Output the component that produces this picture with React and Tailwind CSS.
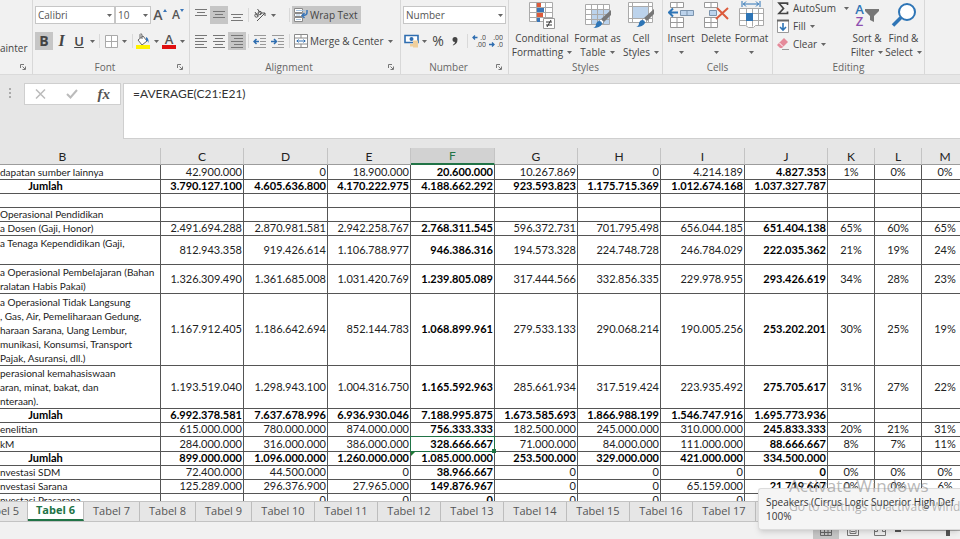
import React, { useState } from 'react';

const columns = [
  { id: 'B', width: 'w-[161px]' },
  { id: 'C', width: 'w-[83px]' },
  { id: 'D', width: 'w-[84px]' },
  { id: 'E', width: 'w-[83px]' },
  { id: 'F', width: 'w-[84px]' },
  { id: 'G', width: 'w-[83px]' },
  { id: 'H', width: 'w-[83px]' },
  { id: 'I', width: 'w-[84px]' },
  { id: 'J', width: 'w-[83px]' },
  { id: 'K', width: 'w-[47px]' },
  { id: 'L', width: 'w-[47px]' },
  { id: 'M', width: 'w-[47px]' },
];

const rows = [
  { h: 'h-[15px]', label: ['dapatan sumber lainnya'], v: ['42.900.000', '0', '18.900.000', '20.600.000', '10.267.869', '0', '4.214.189', '4.827.353', '1%', '0%', '0%'] },
  { h: 'h-[14px]', total: true, label: ['Jumlah'], v: ['3.790.127.100', '4.605.636.800', '4.170.222.975', '4.188.662.292', '923.593.823', '1.175.715.369', '1.012.674.168', '1.037.327.787', '', '', ''] },
  { h: 'h-[14px]', label: [''], v: ['', '', '', '', '', '', '', '', '', '', ''] },
  { h: 'h-[14px]', label: ['Operasional Pendidikan'], v: ['', '', '', '', '', '', '', '', '', '', ''] },
  { h: 'h-[14px]', label: ['a Dosen (Gaji, Honor)'], v: ['2.491.694.288', '2.870.981.581', '2.942.258.767', '2.768.311.545', '596.372.731', '701.795.498', '656.044.185', '651.404.138', '65%', '60%', '65%'] },
  { h: 'h-[29px]', label: ['a Tenaga Kependidikan (Gaji,', ''], v: ['812.943.358', '919.426.614', '1.106.788.977', '946.386.316', '194.573.328', '224.748.728', '246.784.029', '222.035.362', '21%', '19%', '24%'] },
  { h: 'h-[29px]', label: ['a Operasional Pembelajaran (Bahan', 'ralatan Habis Pakai)'], v: ['1.326.309.490', '1.361.685.008', '1.031.420.769', '1.239.805.089', '317.444.566', '332.856.335', '229.978.955', '293.426.619', '34%', '28%', '23%'] },
  { h: 'h-[72px]', label: ['a Operasional Tidak Langsung', ', Gas, Air, Pemeliharaan Gedung,', 'haraan Sarana, Uang Lembur,', 'munikasi, Konsumsi, Transport', 'Pajak, Asuransi, dll.)'], v: ['1.167.912.405', '1.186.642.694', '852.144.783', '1.068.899.961', '279.533.133', '290.068.214', '190.005.256', '253.202.201', '30%', '25%', '19%'] },
  { h: 'h-[43px]', label: ['perasional kemahasiswaan', 'aran, minat, bakat, dan', 'nteraan).'], v: ['1.193.519.040', '1.298.943.100', '1.004.316.750', '1.165.592.963', '285.661.934', '317.519.424', '223.935.492', '275.705.617', '31%', '27%', '22%'] },
  { h: 'h-[14px]', total: true, label: ['Jumlah'], v: ['6.992.378.581', '7.637.678.996', '6.936.930.046', '7.188.995.875', '1.673.585.693', '1.866.988.199', '1.546.747.916', '1.695.773.936', '', '', ''] },
  { h: 'h-[14px]', label: ['enelitian'], v: ['615.000.000', '780.000.000', '874.000.000', '756.333.333', '182.500.000', '245.000.000', '310.000.000', '245.833.333', '20%', '21%', '31%'] },
  { h: 'h-[15px]', active: true, label: ['kM'], v: ['284.000.000', '316.000.000', '386.000.000', '328.666.667', '71.000.000', '84.000.000', '111.000.000', '88.666.667', '8%', '7%', '11%'] },
  { h: 'h-[14px]', total: true, flag: true, label: ['Jumlah'], v: ['899.000.000', '1.096.000.000', '1.260.000.000', '1.085.000.000', '253.500.000', '329.000.000', '421.000.000', '334.500.000', '', '', ''] },
  { h: 'h-[14px]', label: ['nvestasi SDM'], v: ['72.400.000', '44.500.000', '0', '38.966.667', '0', '0', '0', '0', '0%', '0%', '0%'] },
  { h: 'h-[14px]', label: ['nvestasi Sarana'], v: ['125.289.000', '296.376.900', '27.965.000', '149.876.967', '0', '0', '65.159.000', '21.719.667', '0%', '0%', '6%'] },
  { h: 'h-[14px]', label: ['nvestasi Prasarana'], v: ['', '0', '0', '0', '0', '0', '0', '', '', '', ''] },
];

const sheets = [5, 6, 7, 8, 9, 10, 11, 12, 13, 14, 15, 16, 17, 18];

function Caret() {
  return (
    <svg width="5" height="3" viewBox="0 0 5 3" className="shrink-0">
      <path d="M0 0h5L2.5 3z" fill="#666" />
    </svg>
  );
}

function DropButton({ label, width = 'w-[10px]' }) {
  return (
    <button type="button" aria-label={label} className={`flex h-[18px] items-center justify-center ${width}`}>
      <Caret />
    </button>
  );
}

function Tool({ label, width = 'w-[18px]', pressed, children }) {
  return (
    <button
      type="button"
      aria-label={label}
      className={`flex h-[18px] shrink-0 items-center justify-center ${width} ${pressed ? 'bg-[#c6c6c6]' : ''}`}
    >
      {children}
    </button>
  );
}

function Divider({ width = 'w-[5px]' }) {
  return (
    <div className={`flex h-[14px] shrink-0 justify-center ${width}`}>
      <div className="w-px bg-[#d9d9d9]" />
    </div>
  );
}

function Group({ title, width, launcher, children }) {
  return (
    <section className={`flex shrink-0 flex-col justify-between border-r border-[#d8d8d8] ${width}`}>
      <div>{children}</div>
      <div className="flex h-[14px] items-center">
        <div className="flex-1 text-center text-[#666]">{title}</div>
        {launcher && (
          <button type="button" aria-label={`${title} settings`} className="w-3">
            <svg width="6" height="6" viewBox="0 0 6 6" fill="none" stroke="#777">
              <path d="M.5 4V.5H4M2.5 2.5l2.5 2.5M5.5 2.5v3h-3" />
            </svg>
          </button>
        )}
      </div>
    </section>
  );
}

function BigButton({ lines, width, icon }) {
  return (
    <button type="button" className={`flex shrink-0 flex-col items-center whitespace-nowrap ${width}`}>
      <span className="flex h-[31px] items-start justify-center">{icon}</span>
      <span className="leading-[14px]">{lines[0]}</span>
      <span className="flex h-[14px] items-center gap-1 leading-[14px]">
        {lines[1] && <span>{lines[1]}</span>}
        <Caret />
      </span>
    </button>
  );
}

function Lines({ rows: list }) {
  return (
    <svg width="12" height="14" viewBox="0 0 12 14" stroke="#777">
      {list.map(([x1, x2, y]) => (
        <path key={y} d={`M${x1} ${y}.5H${x2}`} />
      ))}
    </svg>
  );
}

function Combo({ label, value, width }) {
  return (
    <div className={`relative h-[18px] border border-[#c6c6c6] bg-white ${width}`}>
      <select aria-label={label} defaultValue={value} className="block h-full w-full appearance-none pl-[2px] leading-[16px] text-[#555]">
        <option>{value}</option>
      </select>
      <span className="pointer-events-none absolute right-[2px] top-[7px]">
        <Caret />
      </span>
    </div>
  );
}

function FontGroup() {
  return (
    <Group title="Font" width="w-[157px]" launcher>
      <div className="flex flex-col gap-2 pl-[2px] pt-[6px]">
        <div className="flex items-center">
          <Combo label="Font" value="Calibri" width="w-[80px]" />
          <Combo label="Font size" value="10" width="w-[36px]" />
          <Tool label="Increase font size">
            <span className="text-sm font-semibold text-[#555]">A</span>
            <svg width="4" height="12" viewBox="0 0 4 12"><path d="M0 3l2-3 2 3z" fill="#3a76b8" /></svg>
          </Tool>
          <Tool label="Decrease font size">
            <span className="text-xs font-semibold text-[#555]">A</span>
            <svg width="4" height="12" viewBox="0 0 4 12"><path d="M0 0h4L2 3z" fill="#3a76b8" /></svg>
          </Tool>
        </div>
        <div className="flex items-center">
          <Tool label="Bold" pressed><span className="text-sm font-bold text-[#444]">B</span></Tool>
          <Tool label="Italic" width="w-[17px]"><span className="font-['Liberation_Serif',serif] text-base font-bold italic text-[#444]">I</span></Tool>
          <Tool label="Underline"><span className="text-[13px] leading-[14px] font-semibold text-[#444] underline">U</span></Tool>
          <DropButton label="Underline styles" width="w-[8px]" />
          <Divider width="w-[7px]" />
          <Tool label="Borders" width="w-[16px]">
            <svg width="13" height="13" viewBox="0 0 13 13" fill="#fff" stroke="#aaa"><path d="M.5.5h12v12H.5zM6.5.5v12M.5 6.5h12" /></svg>
          </Tool>
          <DropButton label="Border styles" />
          <Divider width="w-[6px]" />
          <Tool label="Fill color" width="w-[16px]">
            <svg width="16" height="16" viewBox="0 0 16 16" fill="none">
              <path d="M3 7l5-4 4 5-5 4z" fill="#fff" stroke="#666" />
              <path d="M7 6V1.5q-1.500-1.500-2 0V5" stroke="#666" />
              <path d="M11 4q3 1 2.500 6-1-3-2.500-2z" fill="#3a76b8" />
              <path d="M1 12h14v4H1z" fill="#fff200" />
            </svg>
          </Tool>
          <DropButton label="Fill colors" />
          <Tool label="Font color" width="w-[16px]">
            <span className="flex flex-col items-center">
              <span className="text-[13px] leading-[12px] font-semibold text-[#555]">A</span>
              <span className="h-1 w-[14px] bg-[#e01010]" />
            </span>
          </Tool>
          <DropButton label="Font colors" />
        </div>
      </div>
    </Group>
  );
}

function AlignmentGroup() {
  return (
    <Group title="Alignment" width="w-[211px]" launcher>
      <div className="flex flex-col gap-2 pl-[2px] pt-[6px]">
        <div className="flex items-center">
          <Tool label="Top align"><Lines rows={[[0, 12, 1], [2, 10, 4], [0, 12, 7]]} /></Tool>
          <Tool label="Middle align" pressed><Lines rows={[[0, 12, 3], [2, 10, 6], [0, 12, 9]]} /></Tool>
          <Tool label="Bottom align"><Lines rows={[[0, 12, 6], [2, 10, 9], [0, 12, 12]]} /></Tool>
          <Divider />
          <Tool label="Orientation">
            <svg width="14" height="14" viewBox="0 0 14 14" fill="none" stroke="#555">
              <circle cx="3.500" cy="7.500" r="1.700" />
              <circle cx="6.800" cy="5" r="1.700" />
              <path d="M2 4l3 4.500M4.500 1l3.500 5M4 13l8-8M12 5H9M12 5v3" />
            </svg>
          </Tool>
          <DropButton label="Orientation options" width="w-[8px]" />
          <div className="w-[10px]" />
          <Divider />
          <button type="button" className="flex h-[18px] w-[69px] items-center gap-[2px] whitespace-nowrap bg-[#c6c6c6] pl-[2px]">
            <svg width="14" height="14" viewBox="0 0 14 14" fill="none">
              <path d="M.5.5h8v4h-8zM.5 5.500h8v3h-8zM.5 9.500h8v4h-8z" fill="#fff" stroke="#8a8a8a" />
              <path d="M2 2.500h9M2 7h4M2 11.500h5" stroke="#a8c4e0" />
              <path d="M13 2v2.500q0 3-4.500 3M10.500 5L8 7.500l2.500 2.500" stroke="#3a76b8" strokeWidth="1.500" />
            </svg>
            Wrap Text
          </button>
        </div>
        <div className="flex items-center">
          <Tool label="Align left"><Lines rows={[[0, 12, 1], [0, 9, 4], [0, 12, 7], [0, 9, 10], [0, 12, 13]]} /></Tool>
          <Tool label="Center"><Lines rows={[[0, 12, 1], [2, 10, 4], [0, 12, 7], [2, 10, 10], [0, 12, 13]]} /></Tool>
          <Tool label="Align right" pressed><Lines rows={[[0, 12, 1], [3, 12, 4], [0, 12, 7], [3, 12, 10], [0, 12, 13]]} /></Tool>
          <Divider />
          <Tool label="Decrease indent">
            <svg width="14" height="13" viewBox="0 0 14 13" fill="none">
              <path d="M1 .5h12M7 3.500h6M7 6.500h6M7 9.500h6M1 12.500h12" stroke="#999" />
              <path d="M6 6.500H1M3.500 4L1 6.500 3.500 9" stroke="#2e6db0" strokeWidth="1.500" />
            </svg>
          </Tool>
          <Tool label="Increase indent">
            <svg width="14" height="13" viewBox="0 0 14 13" fill="none">
              <path d="M1 .5h12M7 3.500h6M7 6.500h6M7 9.500h6M1 12.500h12" stroke="#999" />
              <path d="M0 6.500h5M3 4l2.500 2.500L3 9" stroke="#2e6db0" strokeWidth="1.500" />
            </svg>
          </Tool>
          <Divider />
          <button type="button" className="flex h-[18px] items-center gap-[2px] whitespace-nowrap pl-[2px]">
            <svg width="14" height="14" viewBox="0 0 14 14" fill="none">
              <path d="M.5.5h13v13H.5zM.5 4h13M.5 10h13M7 .5V4M7 10v3.500" fill="#fff" stroke="#8a8a8a" />
              <path d="M2.500 7h9M4.500 5.500L3 7l1.500 1.500M9.500 5.500L11 7 9.500 8.500" stroke="#2e6db0" />
            </svg>
            Merge &amp; Center
          </button>
          <DropButton label="Merge options" width="w-[14px]" />
        </div>
      </div>
    </Group>
  );
}

function DecimalIcon({ more }) {
  return (
    <svg width="14" height="14" viewBox="0 0 14 14" fill="none">
      <text x="14" y="6" textAnchor="end" fontSize="7" fill="#444">{more ? '.0' : '.00'}</text>
      <text x="14" y="13" textAnchor="end" fontSize="7" fill="#444">{more ? '.00' : '.0'}</text>
      <path d={more ? 'M5.500 3.500H1M3 1.500l-2 2 2 2' : 'M0 10.500h4.500M3 8.500l2 2-2 2'} stroke="#2e6db0" strokeWidth="1.300" />
    </svg>
  );
}

function NumberGroup() {
  return (
    <Group title="Number" width="w-[108px]" launcher>
      <div className="flex flex-col gap-2 pl-[2px] pt-[6px]">
        <Combo label="Number format" value="Number" width="w-[103px]" />
        <div className="flex items-center">
          <Tool label="Accounting format" width="w-[16px]">
            <svg width="15" height="14" viewBox="0 0 15 14">
              <path d="M1 1.500h13v7H1z" fill="#fff" stroke="#2e6db0" strokeWidth="1.600" />
              <circle cx="7.500" cy="5" r="2" fill="#2e6db0" />
              <path d="M9 6.500h5v2.500H9zM6 10h4v2.500H6zM9 9h5v4.500H9z" fill="#f0cf9c" />
            </svg>
          </Tool>
          <DropButton label="Accounting options" />
          <Tool label="Percent"><span className="text-sm text-[#444]">%</span></Tool>
          <Tool label="Comma style" width="w-[16px]">
            <svg width="6" height="9" viewBox="0 0 6 9"><path d="M3 0a2.500 2.500 0 0 1 2.500 2.500Q5.500 7 1 8.500L.8 8Q3 6.500 3 5A2.500 2.500 0 0 1 3 0z" fill="#444" /></svg>
          </Tool>
          <Divider width="w-[8px]" />
          <Tool label="Increase decimal" width="w-[16px]"><DecimalIcon more /></Tool>
          <Tool label="Decrease decimal"><DecimalIcon /></Tool>
        </div>
      </div>
    </Group>
  );
}

function Brush({ x, y }) {
  return (
    <g transform={`translate(${x} ${y})`}>
      <path d="M18 0v5l-7 7-3-3z" fill="#777" />
      <path d="M8 9l3 3-2 2-3-3z" fill="#fff" stroke="#777" strokeWidth=".6" />
      <path d="M6 11q3 0 3 3-2 4-9 4 3-1 3-4 1-3 3-3z" fill="#2e75b6" />
    </g>
  );
}

function StylesGroup() {
  return (
    <Group title="Styles" width="w-[154px]">
      <div className="flex pl-[2px]">
        <BigButton
          lines={['Conditional', 'Formatting']}
          width="w-[62px]"
          icon={
            <svg width="26" height="29" viewBox="0 0 26 29" fill="none">
              <path d="M.5 2.500h23v19H.5zM.5 7.500h23M.5 12.500h23M.5 17.500h23M7.500 2.500v19M16.500 2.500v19" fill="#fff" stroke="#aaa" />
              <path d="M8 3h4v4H8zM8 13h6v4H8z" fill="#dc5b3c" />
              <path d="M8 8h7v4H8zM8 18h3v4H8z" fill="#3a76b8" />
              <path d="M14.500 18.500h11v10h-11z" fill="#fff" stroke="#999" />
              <path d="M17 22h6M17 25h6M22 20l-4 7" stroke="#333" />
            </svg>
          }
        />
        <BigButton
          lines={['Format as', 'Table']}
          width="w-[49px]"
          icon={
            <svg width="28" height="29" viewBox="0 0 28 29" fill="none">
              <path d="M1.500 4.500h24v20h-24z" fill="#fff" stroke="#aaa" />
              <path d="M8 9h17v15H8z" fill="#bcd3ec" />
              <path d="M1.500 9.500h24M1.500 14.500h24M1.500 19.500h24M7.500 4.500v20M13.500 4.500v20M19.500 4.500v20" stroke="#aaa" />
              <Brush x={9} y={10} />
            </svg>
          }
        />
        <BigButton
          lines={['Cell', 'Styles']}
          width="w-[38px]"
          icon={
            <svg width="28" height="29" viewBox="0 0 28 29" fill="none">
              <path d="M1.500 2.500h24v20h-24zM1.500 6.500h24M1.500 18.500h24M5.500 2.500v20M21.500 2.500v20" fill="#fff" stroke="#aaa" />
              <path d="M6 7h15v11H6z" fill="#bcd3ec" />
              <Brush x={9} y={9} />
            </svg>
          }
        />
      </div>
    </Group>
  );
}

function CellsGroup() {
  return (
    <Group title="Cells" width="w-[110px]">
      <div className="flex">
        <BigButton
          lines={['Insert', '']}
          width="w-[36px]"
          icon={
            <svg width="26" height="29" viewBox="0 0 26 29" fill="none">
              <path d="M2.500 2.500h13v5h-13zM9 2.500v5M2.500 17.500h13v10h-13zM9 17.500v10M2.500 22.500h13" fill="#fff" stroke="#999" />
              <path d="M12.500 10.500h13v5h-13zM19 10.500v5" fill="#bcd3ec" stroke="#7a93ad" />
              <path d="M10 12.500H1M5 8.500l-4 4 4 4" stroke="#2e75b6" strokeWidth="2" />
            </svg>
          }
        />
        <BigButton
          lines={['Delete', '']}
          width="w-[34px]"
          icon={
            <svg width="26" height="29" viewBox="0 0 26 29" fill="none">
              <path d="M1.500 2.500h13v5h-13zM8 2.500v5M1.500 17.500h13v10h-13zM8 17.500v10M1.500 22.500h13" fill="#fff" stroke="#999" />
              <path d="M6.500 10.500h7v5h-7z" fill="#bcd3ec" stroke="#7a93ad" />
              <path d="M14 8l11 11M25 8L13 19" stroke="#dc5b3c" strokeWidth="2" />
            </svg>
          }
        />
        <BigButton
          lines={['Format', '']}
          width="w-[37px]"
          icon={
            <svg width="26" height="29" viewBox="0 0 26 29" fill="none">
              <path d="M.5 8.500h24v17h-8l-2 2h-5l-3-2h-6zM.5 13.500h24M.5 20.500h24M7.500 8.500v17M13.500 8.500v18M19.500 8.500v17" fill="#fff" stroke="#aaa" />
              <path d="M7 13h7v8H7z" fill="#2e75b6" />
              <path d="M3 1v6M21 1v6M4 4h16M7 1.500L4.500 4 7 6.500M17 1.500L19.500 4 17 6.500" stroke="#2e75b6" />
            </svg>
          }
        />
      </div>
    </Group>
  );
}

function EditingGroup() {
  return (
    <Group title="Editing" width="w-[152px]">
      <div className="flex">
        <div className="flex w-[76px] shrink-0 flex-col pl-1">
          <button type="button" className="flex h-[17px] items-center gap-1">
            <svg width="12" height="13" viewBox="0 0 12 13" fill="none"><path d="M10.500 3V1.200H2L6.500 6.500 2 11.500h8.500V9.500" stroke="#444" strokeWidth="1.700" /></svg>
            <span className="flex-1 text-left">AutoSum</span>
            <Caret />
          </button>
          <button type="button" className="flex h-[18px] items-center gap-1">
            <svg width="12" height="14" viewBox="0 0 12 14" fill="none">
              <path d="M.5 1.500h11v12H.5z" fill="#fff" stroke="#999" />
              <path d="M0 1.500h12" stroke="#666" strokeWidth="2" />
              <path d="M6 4v7M3 8l3 3 3-3" stroke="#2e75b6" strokeWidth="1.600" />
            </svg>
            Fill
            <Caret />
          </button>
          <button type="button" className="flex h-[18px] items-center gap-1">
            <svg width="12" height="12" viewBox="0 0 12 12">
              <path d="M7 0l4 4-6 6H3L0 7z" fill="#e58a9a" />
              <path d="M2.500 5L6 8.500" stroke="#fff" />
              <path d="M5 11.500h7" stroke="#999" />
            </svg>
            Clear
            <Caret />
          </button>
        </div>
        <BigButton
          lines={['Sort &', 'Filter']}
          width="w-[36px]"
          icon={
            <span className="flex items-center">
              <span className="flex flex-col text-[13px] leading-[12px] font-semibold">
                <span className="text-[#2e75b6]">A</span>
                <span className="text-[#8e4fb0]">Z</span>
              </span>
              <svg width="15" height="29" viewBox="0 0 15 29"><path d="M1 9h14v2l-5 5v6l-4-2v-4L1 11z" fill="#777" /></svg>
            </span>
          }
        />
        <BigButton
          lines={['Find &', 'Select']}
          width="w-[37px]"
          icon={
            <svg width="26" height="29" viewBox="0 0 26 29" fill="none">
              <circle cx="16" cy="12" r="8" fill="#fff" stroke="#2e75b6" strokeWidth="2" />
              <path d="M10 17.500l-8 8" stroke="#2e75b6" strokeWidth="3.500" />
            </svg>
          }
        />
      </div>
    </Group>
  );
}

function Ribbon() {
  return (
    <header className="flex h-[75px] shrink-0 overflow-hidden border-b border-[#dadada] bg-[#f1f1f1] text-[10px] text-[#444]">
      <Group title="" width="w-[33px]" launcher>
        <button type="button" className="pt-[41px] leading-[14px]">ainter</button>
      </Group>
      <FontGroup />
      <AlignmentGroup />
      <NumberGroup />
      <StylesGroup />
      <CellsGroup />
      <EditingGroup />
    </header>
  );
}

function FormulaBar() {
  const [formula, setFormula] = useState('=AVERAGE(C21:E21)');

  return (
    <div className="flex shrink-0 items-start pb-[9px] pt-[8px]">
      <svg width="24" height="21" viewBox="0 0 24 21" fill="#aaa"><path d="M9 5h2v2H9zM9 9h2v2H9zM9 13h2v2H9z" /></svg>
      <div className="flex h-[22px] w-[97px] shrink-0 items-center justify-around border border-[#cfcfcf] bg-white">
        <button type="button" aria-label="Cancel">
          <svg width="11" height="10" viewBox="0 0 11 10" fill="none" stroke="#bbb" strokeWidth="1.500"><path d="M1 .5l9 9M10 .5l-9 9" /></svg>
        </button>
        <button type="button" aria-label="Enter">
          <svg width="12" height="10" viewBox="0 0 12 10" fill="none" stroke="#bbb" strokeWidth="2"><path d="M1 5l3.500 3.500L11 1" /></svg>
        </button>
        <button type="button" aria-label="Insert function" className="font-['Liberation_Serif',serif] text-[15px] leading-[16px] font-bold italic text-[#555]">
          fx
        </button>
      </div>
      <textarea
        aria-label="Formula"
        value={formula}
        onChange={(e) => setFormula(e.target.value)}
        className="ml-[2px] h-[56px] min-w-0 flex-1 resize-none border border-r-0 border-[#cfcfcf] bg-white pl-[9px] pt-[2px] font-['Lato',sans-serif] text-xs text-[#333] outline-none"
      />
    </div>
  );
}

function Sheet() {
  return (
    <main className="min-h-0 flex-1 overflow-hidden bg-white">
      <table className="w-full min-w-[969px] table-fixed border-separate border-spacing-0 font-['Lato',sans-serif] text-[11px] text-[#222]">
        <thead>
          <tr>
            {columns.map(({ id, width }) => (
              <th
                key={id}
                className={`h-[17px] border-r p-0 text-xs leading-[15px] font-normal ${width} ${id === 'B' ? 'pr-[35px]' : ''} ${
                  id === 'F' ? 'border-b-2 border-b-[#217346] border-r-[#c4c4c4] bg-[#d2d2d2] text-[#217346]' : 'border-b border-b-[#9c9c9c] border-r-[#c4c4c4] bg-[#e6e6e6]'
                }`}
              >
                {id}
              </th>
            ))}
            <th className="border-b border-[#9c9c9c] bg-[#e6e6e6] p-0" />
          </tr>
        </thead>
        <tbody>
          {rows.map((row, r) => (
            <tr key={r}>
              <td
                className={`overflow-hidden whitespace-nowrap border-b border-r border-[#555] p-0 ${row.h} ${
                  row.total ? 'pr-[69px] text-center font-bold text-black' : 'text-[10px]'
                } ${row.label.length > 1 ? 'leading-[14px]' : 'pb-px leading-[12px]'}`}
              >
                {row.label.map((line, i) => (
                  <div key={i}>{line || '\u00a0'}</div>
                ))}
              </td>
              {row.v.map((value, c) => {
                const id = columns[c + 1].id;
                const bold = row.total || id === 'F' || id === 'J';
                const selected = row.active && id === 'F';
                return (
                  <td
                    key={id}
                    className={`relative border-b border-r border-[#555] pb-px pt-0 leading-[12px] ${c > 7 ? 'px-0 text-center' : 'pl-0 pr-px text-right'} ${
                      bold ? 'font-bold text-black' : ''
                    }`}
                  >
                    {value}
                    {selected && (
                      <span className="absolute -inset-px z-10 border border-[#217346]">
                        <span className="absolute -bottom-[2px] -right-[2px] h-1 w-1 bg-[#217346]" />
                      </span>
                    )}
                    {row.flag && id === 'F' && (
                      <svg width="4" height="4" viewBox="0 0 4 4" className="absolute left-0 top-0"><path d="M0 0h4L0 4z" fill="#1e7b34" /></svg>
                    )}
                  </td>
                );
              })}
              <td className="border-b border-[#555] p-0" />
            </tr>
          ))}
        </tbody>
      </table>
    </main>
  );
}

function SheetTabs() {
  const [active, setActive] = useState(6);

  return (
    <nav className="flex h-[21px] shrink-0 overflow-hidden border-b border-t border-[#c3c3c3] bg-[#e6e6e6] text-[11px] text-[#555]">
      {sheets.map((n) => (
        <button
          key={n}
          type="button"
          onClick={() => setActive(n)}
          className={`flex h-[19px] shrink-0 items-center whitespace-nowrap border-r border-r-[#bdbdbd] ${
            n === 5 ? 'w-[28px] justify-end pr-[8px]' : n < 10 ? 'w-[56px] justify-center' : 'w-[63px] justify-center'
          } ${n === active ? 'border-b-2 border-b-[#217346] bg-white font-bold text-[#217346]' : ''}`}
        >
          Tabel {n}
        </button>
      ))}
    </nav>
  );
}

function StatusBar() {
  return (
    <footer className="flex h-[17px] shrink-0 items-center justify-end overflow-hidden bg-[#f1f1f1]">
      <button type="button" aria-label="Normal view" className="flex h-[17px] w-[26px] items-center justify-center bg-[#c6c6c6]">
        <svg width="12" height="11" viewBox="0 0 12 11" fill="none" stroke="#666"><path d="M.5.5h11v10H.5zM.5 4h11M.5 7.500h11M4.500.5v10M8 .5v10" /></svg>
      </button>
      <button type="button" aria-label="Page layout" className="flex w-[27px] justify-center">
        <svg width="12" height="11" viewBox="0 0 12 11" fill="none" stroke="#777"><path d="M.5.5h11v10H.5zM3 2.500h6v6H3zM4 4.500h4M4 6.500h4" /></svg>
      </button>
      <button type="button" aria-label="Page break preview" className="flex w-[27px] justify-center">
        <svg width="12" height="11" viewBox="0 0 12 11" fill="none" stroke="#777"><path d="M.5.5h11v10H.5zM.5 6.500h3v-4h5v4h3" /></svg>
      </button>
      <button type="button" aria-label="Zoom out" className="flex w-[10px] justify-center">
        <span className="h-[2px] w-[6px] bg-[#555]" />
      </button>
      <input
        type="range"
        aria-label="Zoom"
        defaultValue="82"
        className="h-3 w-[57px] appearance-none bg-[linear-gradient(#aaa,#aaa)] bg-[length:100%_1px] bg-center bg-no-repeat [&::-webkit-slider-thumb]:h-[10px] [&::-webkit-slider-thumb]:w-1 [&::-webkit-slider-thumb]:appearance-none [&::-webkit-slider-thumb]:bg-[#555]"
      />
    </footer>
  );
}

function App() {
  return (
    <div className="relative flex h-screen flex-col overflow-hidden bg-[#e6e6e6] font-['Open_Sans',sans-serif]">
      <Ribbon />
      <FormulaBar />
      <Sheet />
      <SheetTabs />
      <StatusBar />

      <div role="status" className="absolute bottom-[9px] right-0 z-20 w-[202px] overflow-hidden whitespace-nowrap rounded-l-[3px] border border-r-0 border-[#dcdcdc] bg-[#f5f5f5] py-[6px] pl-[7px] text-[10px] leading-[14px] text-[#333] shadow-md">
        <p>Speakers (Cirrus Logic Superior High Def</p>
        <p>100%</p>
      </div>
      <div className="pointer-events-none absolute bottom-[22px] right-0 z-30 w-[171px] overflow-hidden whitespace-nowrap text-[#8a8a8a]/60">
        <p className="text-[17px] leading-[22px]">Activate Windows</p>
        <p className="text-xs leading-[20px]">Go to Settings to activate Windows.</p>
      </div>
    </div>
  );
}

export default App;
